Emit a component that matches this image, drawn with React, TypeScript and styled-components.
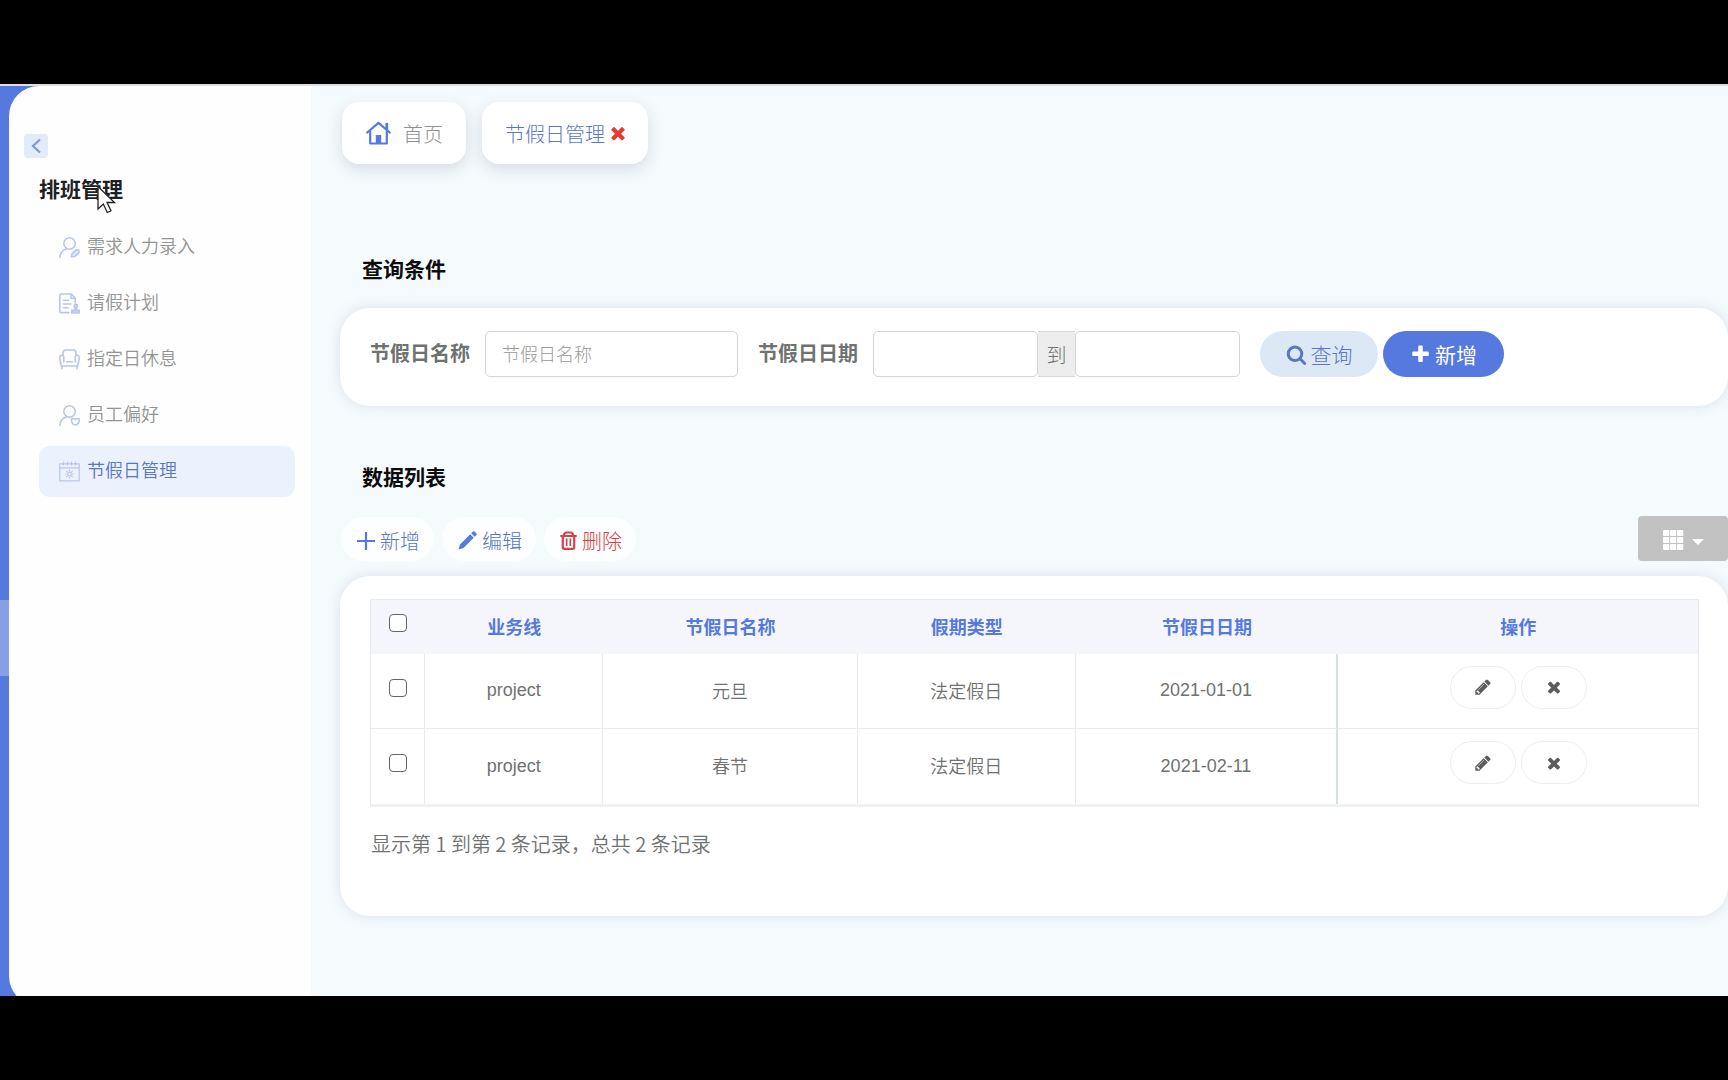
import React from 'react';
import styled, { createGlobalStyle, css } from 'styled-components';

const cjk = '"Noto Sans CJK SC", "Liberation Sans", sans-serif';
const latin = '"Liberation Sans", "Noto Sans CJK SC", sans-serif';
const blue = '#5579df';
const inkBlue = '#5a76c4';

const GlobalStyle = createGlobalStyle`
  *, *::before, *::after { box-sizing: border-box; }
  body { margin: 0; background: #000; font-family: ${cjk}; font-size: 18px; color: #6f7271; }
  h1, h2, p, ul { margin: 0; padding: 0; font-weight: inherit; }
  button, input { font: inherit; color: inherit; }
  button { cursor: pointer; border: 0; background: none; padding: 0; }
  svg { display: block; flex: none; }
`;

const Frame = styled.div`
  display: flex;
  flex-direction: column;
  min-height: 100vh;
  padding: 84px 0;
  overflow: hidden;
`;

const Shell = styled.div`
  display: flex;
  flex: 1;
  position: relative;
  border-top: 2px solid #dcdee0;
  background: #f5fafd;
  overflow: hidden;
`;

const Rail = styled.div`
  display: flex;
  flex-direction: column;
  justify-content: flex-start;
  flex: none;
  width: 39px;
  margin-right: -30px;
  padding-top: 514px;
  background: ${blue};
`;

const RailMark = styled.div`
  height: 76px;
  background: #86a0e8;
`;

const Sidebar = styled.aside`
  position: relative;
  flex: none;
  width: 302px;
  margin-bottom: -10px;
  padding: 48px 16px 0 15px;
  border-radius: 30px 0 0 30px;
  background: #fefefe;
`;

const Collapse = styled.button`
  display: grid;
  place-items: center;
  width: 24px;
  height: 24px;
  border-radius: 4px;
  background: #e2ebf9;
`;

const SideTitle = styled.h1`
  margin: 14px 0 18px 15px;
  font-size: 21px;
  line-height: 32px;
  font-weight: 700;
  color: #1d2023;
`;

const Menu = styled.ul`
  display: flex;
  flex-direction: column;
  gap: 5px;
  margin-left: 15px;
  list-style: none;
`;

const MenuLink = styled.a<{ $active?: boolean }>`
  display: flex;
  align-items: center;
  gap: 7px;
  height: 51px;
  padding: 0 20px;
  border-radius: 11px;
  font-weight: 350;
  text-decoration: none;
  color: ${(p) => (p.$active ? inkBlue : '#939594')};
  background: ${(p) => (p.$active ? '#ecf2fd' : 'transparent')};
`;

const MenuText = styled.span`
  line-height: 26px;
  padding-bottom: 5px;
`;

const Main = styled.main`
  flex: 1;
  min-width: 0;
  padding: 16px 0 0 29px;
`;

const Tabs = styled.nav`
  display: flex;
  gap: 16px;
  padding-left: 2px;
`;

const Tab = styled.div<{ $active?: boolean }>`
  display: flex;
  align-items: center;
  gap: ${(p) => (p.$active ? 3 : 12)}px;
  height: 62px;
  padding: ${(p) => (p.$active ? '0 20px 0 23px' : '0 23px 0 24px')};
  border-radius: 17px;
  background: #fff;
  box-shadow: 0 5px 16px rgba(85, 90, 105, 0.19);
  font-size: 20px;
  font-weight: 300;
  color: ${(p) => (p.$active ? inkBlue : '#8e9091')};
`;

const TabLink = styled.a`
  display: flex;
  align-items: center;
  gap: 12px;
  color: inherit;
  text-decoration: none;
`;

const CloseTab = styled.button`
  color: #e23c34;
`;

const SectionTitle = styled.h2<{ $top: number; $bottom: number }>`
  margin: ${(p) => p.$top}px 0 ${(p) => p.$bottom}px 22px;
  font-size: 21px;
  line-height: 32px;
  font-weight: 700;
  color: #0c0d0e;
`;

const cardStyle = css`
  border-radius: 30px;
  background: #fff;
  box-shadow: 0 0 14px rgba(90, 110, 130, 0.17);
`;

const SearchForm = styled.form`
  ${cardStyle}
  display: flex;
  align-items: center;
  min-height: 98px;
  padding: 0 30px 6px;
`;

const FieldLabel = styled.label`
  padding-bottom: 4px;
  font-size: 20px;
  font-weight: 700;
  white-space: nowrap;
`;

const TextInput = styled.input<{ $wide?: boolean }>`
  width: ${(p) => (p.$wide ? 253 : 165)}px;
  min-width: 0;
  height: 46px;
  padding: 0 16px 2px;
  border: 1px solid #d4d5d5;
  border-radius: 5px;
  background: #fff;
  font-weight: 300;
  outline: 0;
  &::placeholder { color: #999; opacity: 1; }
`;

const Field = styled.div`
  display: flex;
  align-items: center;
  gap: 15px;
  margin-right: 20px;
`;

const Range = styled.div`
  display: flex;
`;

const RangeText = styled.span`
  display: grid;
  place-items: center;
  width: 37px;
  border: solid #d6d6d6;
  border-width: 1px 0;
  background: #ededed;
  font-size: 20px;
  font-weight: 300;
`;

const FormButton = styled.button<{ $primary?: boolean }>`
  display: flex;
  align-items: center;
  justify-content: center;
  gap: 4px;
  width: ${(p) => (p.$primary ? 121 : 118)}px;
  height: 46px;
  margin-right: 5px;
  border-radius: 23px;
  font-size: 21px;
  font-weight: ${(p) => (p.$primary ? 400 : 300)};
  color: ${(p) => (p.$primary ? '#fff' : inkBlue)};
  background: ${(p) => (p.$primary ? blue : '#dde8f6')};
`;

const Toolbar = styled.div`
  display: flex;
  align-items: center;
  gap: 8px;
  margin-bottom: 15px;
  padding-left: 1px;
`;

const ToolButton = styled.button<{ $danger?: boolean }>`
  display: flex;
  align-items: center;
  gap: 5px;
  height: 44px;
  padding: 4px 14px 0 16px;
  border-radius: 22px;
  background: #fdfeff;
  font-size: 20px;
  font-weight: 300;
  color: ${(p) => (p.$danger ? '#dc3f42' : inkBlue)};
`;

const ColumnsButton = styled.button`
  display: flex;
  align-items: center;
  gap: 8px;
  height: 45px;
  margin-left: auto;
  padding: 2px 24px 0 25px;
  border-radius: 4px;
  color: #fff;
  background: #c2c2c2;
`;

const TableCard = styled.section`
  ${cardStyle}
  min-height: 340px;
  padding: 23px 29px 0 30px;
`;

const Table = styled.table`
  width: 100%;
  table-layout: fixed;
  border-collapse: separate;
  border-spacing: 0;
  border: 1px solid #e9ebee;
  border-bottom: 3px solid #eef2f3;
  font-family: ${latin};
  font-weight: 400;
  text-align: center;
`;

const Col = styled.col<{ $w: number }>`
  width: ${(p) => p.$w}%;
`;

const Head = styled.th`
  height: 54px;
  padding: 0 0 2px;
  background: #f4f6fc;
  color: ${blue};
  font-weight: 700;
`;

const Cell = styled.td<{ $last?: boolean; $edge?: boolean; $light?: boolean }>`
  height: 75px;
  padding: ${(p) => (p.$light ? '0 0 3px' : '0 0 1px')};
  border-bottom: 1px solid #e9ecec;
  border-right: ${(p) => (p.$last ? '0' : p.$edge ? '2px solid #d6e2e0' : '1px solid #e9ecec')};
  font-weight: ${(p) => (p.$light ? 350 : 400)};
  tr:last-child > & { border-bottom: 0; }
`;

const Check = styled.input`
  display: block;
  width: 18px;
  height: 18px;
  margin: 0 auto 6px;
  appearance: none;
  border: 1px solid #656565;
  border-radius: 4px;
  background: #fff;
`;

const Actions = styled.div`
  display: flex;
  justify-content: center;
  gap: 5px;
  padding-bottom: 7px;
`;

const ActionButton = styled.button`
  display: grid;
  place-items: center;
  width: 66px;
  height: 43px;
  border: 1px solid #eceded;
  border-radius: 22px;
  color: #5c5c5c;
`;

const Summary = styled.p`
  padding: 21px 0 0 1px;
  font-size: 20px;
  line-height: 32px;
  font-weight: 350;
`;

const Pointer = styled.svg`
  position: absolute;
  top: 99px;
  left: 97px;
`;

const glyphs = {
  times: 'M1490 1322q0 40-28 68l-136 136q-28 28-68 28t-68-28l-294-294-294 294q-28 28-68 28t-68-28l-136-136q-28-28-28-68t28-68l294-294-294-294q-28-28-28-68t28-68l136-136q28-28 68-28t68 28l294 294 294-294q28-28 68-28t68 28l136 136q28 28 28 68t-28 68l-294 294 294 294q28 28 28 68z',
  plus: 'M1600 736v192q0 40-28 68t-68 28h-416v416q0 40-28 68t-68 28h-192q-40 0-68-28t-28-68v-416h-416q-40 0-68-28t-28-68v-192q0-40 28-68t68-28h416v-416q0-40 28-68t68-28h192q40 0 68 28t28 68v416h416q40 0 68 28t28 68z',
  pencil: 'M491 1536l91-91-235-235-91 91v107h128v128h107zm523-928q0-22-22-22-10 0-17 7l-542 542q-7 7-7 17 0 22 22 22 10 0 17-7l542-542q7-7 7-17zm-54-192l416 416-832 832h-416v-416zm683 96q0 53-37 90l-166 166-416-416 166-165q36-38 90-38 53 0 91 38l235 234q37 39 37 91z',
  search: 'M1216 832q0-185-131.5-316.5t-316.5-131.5-316.5 131.5-131.5 316.5 131.5 316.5 316.5 131.5 316.5-131.5 131.5-316.5zm512 832q0 52-38 90t-90 38q-54 0-90-38l-343-342q-179 124-399 124-143 0-273.5-55.5t-225-150-150-225-55.5-273.5 55.5-273.5 150-225 225-150 273.5-55.5 273.5 55.5 225 150 150 225 55.5 273.5q0 220-124 399l343 343q37 37 37 90z',
};

const Glyph = ({ name, size }: { name: keyof typeof glyphs; size: number }) => (
  <svg width={size} height={size} viewBox="0 0 1792 1792" fill="currentColor" aria-hidden="true">
    <path d={glyphs[name]} />
  </svg>
);

const LineIcon = ({ children }: { children: React.ReactNode }) => (
  <svg width="21" height="21" viewBox="0 0 21 21" fill="none" stroke="#b9c6ea" strokeWidth="1.6" strokeLinecap="round" strokeLinejoin="round" aria-hidden="true">
    {children}
  </svg>
);

const menu = [
  {
    label: '需求人力录入',
    icon: (
      <LineIcon>
        <circle cx="10.5" cy="6.5" r="5.7" />
        <path d="M7.5 11.8C3.8 13 1.4 16 .8 20.2" />
        <path d="M12.4 19.6q-.2-1.800 1-3.200l3.200-3.200q1.500-1.200 2.900 0 1.200 1.400 0 2.900l-3.200 3q-1.500 1-3.900.5z" fill="#dfe6f7" />
      </LineIcon>
    ),
  },
  {
    label: '请假计划',
    icon: (
      <LineIcon>
        <path d="M16.2 10V5L12.2 1H2.2Q.8 1 .8 2.4V18.2Q.8 19.6 2.2 19.6H10" />
        <path d="M12 1.4V5.2H16M4.5 7.2h5M4.5 11h7.500M4.500 14.800h4.500" />
        <path d="M15.800 16.600q.8-1.200 0-2.400a1.600 1.600 0 1 1 2 0q-.8 1.200 0 2.400zM12.800 17.400h7.400v2.600h-7.400z" fill="#cdd8f3" />
      </LineIcon>
    ),
  },
  {
    label: '指定日休息',
    icon: (
      <LineIcon>
        <path d="M4 6.500V4Q4 1 7 1h7q3 0 3 3v2.500" />
        <path d="M4.800 13V8.500Q4.500 6 2.500 6.300.3 7 .8 9.500L2.300 17h16.400l1.500-7.500q.5-2.500-1.700-3.200-2-.3-2.300 2.200V13" />
        <path d="M7.500 12.800h6M3 17v2.800M18 17v2.800" />
      </LineIcon>
    ),
  },
  {
    label: '员工偏好',
    icon: (
      <LineIcon>
        <circle cx="10.500" cy="6.500" r="5.700" />
        <path d="M7.500 11.800C3.800 13 1.400 16 .8 20.200" />
        <path d="M16.400 14.400q2.200-1.600 3.800-.4.400 2.800-1 4.400-1.300 1.500-2.800 1.600-1.500-.1-2.800-1.600-1.400-1.600-1-4.400 1.600-1.200 3.800.4z" />
      </LineIcon>
    ),
  },
  {
    label: '节假日管理',
    active: true,
    icon: (
      <LineIcon>
        <path d="M.8 2.800h19.400v17H.8zM.8 6.800h19.400M4.500 1v3M8.500 1v3M12.500 1v3M16.500 1v3" strokeWidth="1.200" />
        <circle cx="10.500" cy="13" r="1.800" strokeWidth="1.200" />
        <path d="M10.500 9v.8M10.500 16.200v.8M6.500 13h.8M13.700 13h.8M7.700 10.200l.6.6M12.700 15.200l.6.6M13.300 10.200l-.6.6M8.300 15.200l-.6.6" strokeWidth="1.200" />
      </LineIcon>
    ),
  },
];

const rows = [
  { line: 'project', name: '元旦', type: '法定假日', date: '2021-01-01' },
  { line: 'project', name: '春节', type: '法定假日', date: '2021-02-11' },
];

const columns = ['业务线', '节假日名称', '假期类型', '节假日日期', '操作'];
const widths = [4.1, 13.4, 19.2, 16.4, 19.8, 27.1];

export default function App() {
  return (
    <>
      <GlobalStyle />
      <Frame>
        <Shell>
          <Rail><RailMark /></Rail>
          <Sidebar>
            <Collapse type="button" aria-label="收起菜单">
              <svg width="10" height="16" viewBox="0 0 10 16" fill="none" stroke="#7f9ad8" strokeWidth="2.200" aria-hidden="true">
                <path d="M9 1.500L2 8l7 6.500" />
              </svg>
            </Collapse>
            <SideTitle>排班管理</SideTitle>
            <Menu>
              {menu.map((m) => (
                <li key={m.label}>
                  <MenuLink href="#" $active={m.active}>
                    {m.icon}
                    <MenuText>{m.label}</MenuText>
                  </MenuLink>
                </li>
              ))}
            </Menu>
          </Sidebar>

          <Main>
            <Tabs>
              <Tab>
                <TabLink href="#">
                  <svg width="25" height="24" viewBox="0 0 25 24" fill="none" stroke={blue} strokeWidth="2.200" strokeLinecap="round" strokeLinejoin="round" aria-hidden="true">
                    <path d="M1.200 11.500L12.500 1.800l11.300 9.700" />
                    <path d="M20.800 8V3.200" strokeWidth="2.800" />
                    <path d="M4.200 10.500V22.500h16.600V10.500" />
                    <path d="M9.800 22v-8h5.400V22z" fill={blue} stroke="none" />
                  </svg>
                  首页
                </TabLink>
              </Tab>
              <Tab $active>
                <TabLink href="#">节假日管理</TabLink>
                <CloseTab type="button" aria-label="关闭"><Glyph name="times" size={20} /></CloseTab>
              </Tab>
            </Tabs>

            <SectionTitle $top={88} $bottom={24}>查询条件</SectionTitle>
            <SearchForm onSubmit={(e) => e.preventDefault()}>
              <Field>
                <FieldLabel htmlFor="holiday-name">节假日名称</FieldLabel>
                <TextInput id="holiday-name" $wide placeholder="节假日名称" />
              </Field>
              <Field>
                <FieldLabel htmlFor="date-from">节假日日期</FieldLabel>
                <Range>
                  <TextInput id="date-from" />
                  <RangeText>到</RangeText>
                  <TextInput aria-label="结束日期" />
                </Range>
              </Field>
              <FormButton type="submit"><Glyph name="search" size={21} />查询</FormButton>
              <FormButton type="button" $primary><Glyph name="plus" size={21} />新增</FormButton>
            </SearchForm>

            <SectionTitle $top={54} $bottom={24}>数据列表</SectionTitle>
            <Toolbar>
              <ToolButton type="button">
                <svg width="18" height="18" viewBox="0 0 18 18" stroke={blue} strokeWidth="2.200" aria-hidden="true"><path d="M9 0v18M0 9h18" /></svg>
                新增
              </ToolButton>
              <ToolButton type="button">
                <svg width="19" height="19" viewBox="0 0 19 19" fill={blue} aria-hidden="true">
                  <path d="M.5 18.500L2 13.500 12.200 3.300l3.500 3.500L5.500 17zM13.200 2.300L15 .6q.9-.7 1.800.1l1.500 1.500q.8.9.1 1.800L16.700 5.800z" />
                </svg>
                编辑
              </ToolButton>
              <ToolButton type="button" $danger>
                <svg width="17" height="19" viewBox="0 0 17 19" fill="none" stroke="#dc3f42" strokeWidth="2.200" strokeLinejoin="round" aria-hidden="true">
                  <path d="M.3 5h16.400M3.800 4.500Q4.200 1.500 6.500 1.500h4q2.300 0 2.700 3M2.800 6v10.300q0 1.500 1.500 1.500h8.400q1.500 0 1.500-1.500V6" />
                  <path d="M6.700 7.500v7.500M10.300 7.500v7.500" strokeWidth="1.600" />
                </svg>
                删除
              </ToolButton>
              <ColumnsButton type="button" aria-label="选择列">
                <svg width="21" height="20" viewBox="0 0 21 20" fill="currentColor" aria-hidden="true">
                  {[0, 7, 14].map((y) => [0, 7, 14].map((x) => <rect key={`${x}-${y}`} x={x} y={y} width="6.300" height="5.900" rx="1" />))}
                </svg>
                <svg width="12" height="10" viewBox="0 0 12 10" fill="currentColor" aria-hidden="true"><path d="M0 4h12L6 10z" /></svg>
              </ColumnsButton>
            </Toolbar>

            <TableCard>
              <Table>
                <colgroup>{widths.map((w) => <Col key={w} $w={w} />)}</colgroup>
                <thead>
                  <tr>
                    <Head><Check type="checkbox" aria-label="全选" /></Head>
                    {columns.map((c) => <Head key={c} scope="col">{c}</Head>)}
                  </tr>
                </thead>
                <tbody>
                  {rows.map((r) => (
                    <tr key={r.date}>
                      <Cell><Check type="checkbox" aria-label={r.name} /></Cell>
                      <Cell>{r.line}</Cell>
                      <Cell $light>{r.name}</Cell>
                      <Cell $light>{r.type}</Cell>
                      <Cell $edge>{r.date}</Cell>
                      <Cell $last>
                        <Actions>
                          <ActionButton type="button" aria-label="编辑"><Glyph name="pencil" size={18} /></ActionButton>
                          <ActionButton type="button" aria-label="删除"><Glyph name="times" size={18} /></ActionButton>
                        </Actions>
                      </Cell>
                    </tr>
                  ))}
                </tbody>
              </Table>
              <Summary>显示第 1 到第 2 条记录，总共 2 条记录</Summary>
            </TableCard>
          </Main>

          <Pointer width="20" height="29" viewBox="0 0 20 29" fill="#fff" stroke="#222" strokeWidth="1.300" aria-hidden="true">
            <path d="M1 1.500V24l5.300-5 4 8.500 3.700-1.700-4-8.300h7.500z" />
          </Pointer>
        </Shell>
      </Frame>
    </>
  );
}
